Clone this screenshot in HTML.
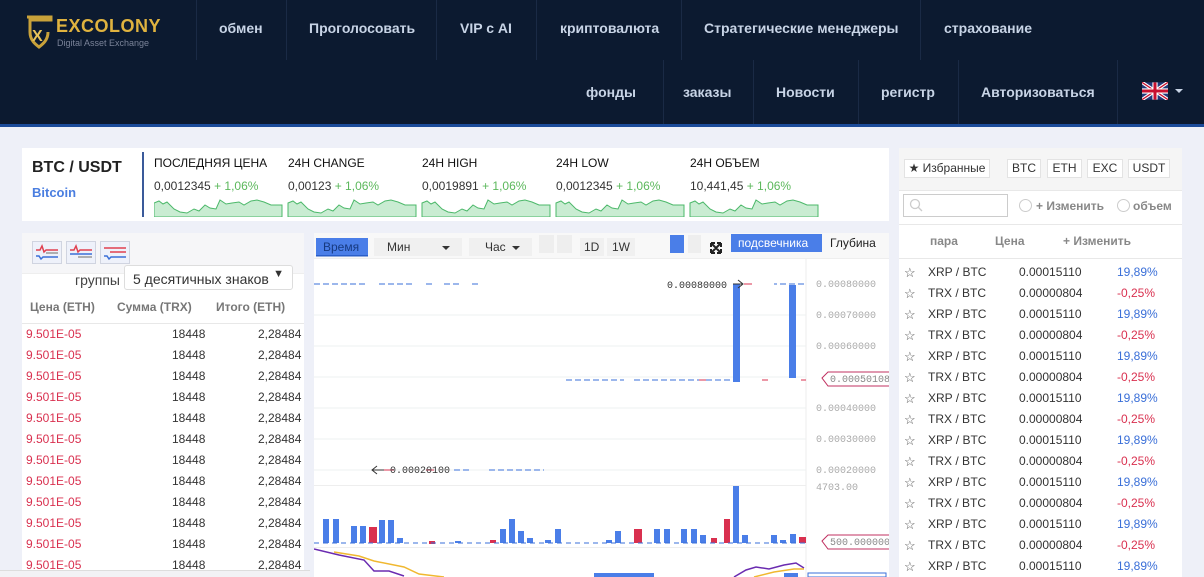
<!DOCTYPE html>
<html style="width:1204px;height:577px;overflow:hidden"><head><meta charset="utf-8">
<style>
*{margin:0;padding:0;box-sizing:border-box}
body{width:1204px;height:577px;overflow:hidden;background:#eef0f8;font-family:"Liberation Sans",Arial,sans-serif;position:relative;font-size:12px;color:#333}
.a{position:absolute;white-space:nowrap}
.nav{left:0;top:0;width:1204px;background:#0c1a30;border-bottom:3px solid #1b4b9a;height:127px}
.ni{position:absolute;color:#c8d4e6;font-weight:bold;font-size:14px;white-space:nowrap}
.sep{position:absolute;width:1px;background:#1a2a45}
.w{background:#fff}
.red{color:#d9304f}.grn{color:#5cb85c}.blu{color:#3a6fd8}
.ob div{position:absolute;font-size:12px;white-space:nowrap}
.btn{position:absolute;background:#fff;border:1px solid #e3e3e3;font-size:12px;text-align:center;line-height:17px;height:19px;top:159px;white-space:nowrap}
</style></head><body>
<div class="a nav"></div>
<!-- logo -->
<svg class="a" style="left:26px;top:15px" width="30" height="35" viewBox="0 0 30 35">
<path d="M1 2h24v3H4v12c0 8 5 12 9 15 4-3 9-7 9-15" fill="none" stroke="#c9a23a" stroke-width="3"/>
<text x="6" y="26" font-family="Liberation Sans" font-weight="bold" font-size="16" fill="#e8c35a">X</text></svg>
<div class="a" style="left:56px;top:16px;color:#e0b33f;font-weight:bold;font-size:18px;letter-spacing:0.5px">EXCOLONY</div>
<div class="a" style="left:57px;top:38px;color:#7a8398;font-size:9px">Digital Asset Exchange</div>
<!-- top nav -->
<div class="sep" style="left:196px;top:0;height:60px"></div>
<div class="sep" style="left:286px;top:0;height:60px"></div>
<div class="sep" style="left:436px;top:0;height:60px"></div>
<div class="sep" style="left:536px;top:0;height:60px"></div>
<div class="sep" style="left:681px;top:0;height:60px"></div>
<div class="sep" style="left:920px;top:0;height:60px"></div>
<div class="ni" style="left:219px;top:20px">обмен</div>
<div class="ni" style="left:309px;top:20px">Проголосовать</div>
<div class="ni" style="left:460px;top:20px">VIP с AI</div>
<div class="ni" style="left:560px;top:20px">криптовалюта</div>
<div class="ni" style="left:704px;top:20px">Стратегические менеджеры</div>
<div class="ni" style="left:944px;top:20px">страхование</div>
<div class="sep" style="left:663px;top:60px;height:64px"></div>
<div class="sep" style="left:753px;top:60px;height:64px"></div>
<div class="sep" style="left:858px;top:60px;height:64px"></div>
<div class="sep" style="left:958px;top:60px;height:64px"></div>
<div class="sep" style="left:1117px;top:60px;height:64px"></div>
<div class="ni" style="left:586px;top:84px">фонды</div>
<div class="ni" style="left:683px;top:84px">заказы</div>
<div class="ni" style="left:776px;top:84px">Новости</div>
<div class="ni" style="left:881px;top:84px">регистр</div>
<div class="ni" style="left:981px;top:84px">Авторизоваться</div>
<svg class="a" style="left:1142px;top:82px" width="26" height="18" viewBox="0 0 60 40"><rect width="60" height="40" fill="#22397a"/><path d="M0 0L60 40M60 0L0 40" stroke="#fff" stroke-width="8"/><path d="M0 0L60 40M60 0L0 40" stroke="#c8102e" stroke-width="3"/><path d="M30 0v40M0 20h60" stroke="#fff" stroke-width="12"/><path d="M30 0v40M0 20h60" stroke="#c8102e" stroke-width="7"/></svg>
<div class="a" style="left:1175px;top:89px;border:4px solid transparent;border-top:4px solid #c8d4e6"></div>

<!-- stats -->
<div class="a w" style="left:22px;top:148px;width:867px;height:73px"></div>
<div class="a" style="left:32px;top:159px;font-weight:bold;font-size:16px;color:#222">BTC / USDT</div>
<div class="a" style="left:32px;top:185px;font-weight:bold;font-size:13px;color:#4a7ee0">Bitcoin</div>
<div class="a" style="left:142px;top:152px;width:2px;height:65px;background:#3a5a9a"></div>
<div class="a" style="left:154px;top:156px;font-size:12px;color:#111">ПОСЛЕДНЯЯ ЦЕНА</div>
<div class="a" style="left:288px;top:156px;font-size:12px;color:#111">24H CHANGE</div>
<div class="a" style="left:422px;top:156px;font-size:12px;color:#111">24H HIGH</div>
<div class="a" style="left:556px;top:156px;font-size:12px;color:#111">24H LOW</div>
<div class="a" style="left:690px;top:156px;font-size:12px;color:#111">24H ОБЪЕМ</div>
<div class="a" style="left:154px;top:179px">0,0012345 <span class="grn">+ 1,06%</span></div>
<div class="a" style="left:288px;top:179px">0,00123 <span class="grn">+ 1,06%</span></div>
<div class="a" style="left:422px;top:179px">0,0019891 <span class="grn">+ 1,06%</span></div>
<div class="a" style="left:556px;top:179px">0,0012345 <span class="grn">+ 1,06%</span></div>
<div class="a" style="left:690px;top:179px">10,441,45 <span class="grn">+ 1,06%</span></div>
<svg class="a" style="left:154px;top:197px" width="670" height="20">
<defs><path id="sp" d="M0 6L5 4L9 7L13 5L20 12L26 15L33 16L40 12L45 14L51 8L56 11L62 12L66 3L72 7L78 6L85 5L90 8L97 4L103 3L110 5L117 8L128 8V20H0Z"/></defs>
<g fill="#c9ecd2" stroke="#4cb86a" stroke-width="1">
<use href="#sp"/><use href="#sp" x="134"/><use href="#sp" x="268"/><use href="#sp" x="402"/><use href="#sp" x="536"/></g></svg>

<!-- order book -->
<div class="a" style="left:22px;top:233px;width:282px;height:344px;background:#fff"></div>
<div class="a" style="left:22px;top:233px;width:282px;height:40px;background:#f6f6f8"></div>
<svg class="a" style="left:32px;top:241px" width="100" height="24">
<g fill="#eef1fa" stroke="#d0d4e0"><rect x="0.5" y="0.5" width="29" height="22"/><rect x="34.5" y="0.5" width="29" height="22"/><rect x="68.5" y="0.5" width="29" height="22"/></g>
<g stroke-width="1.5" fill="none"><path d="M4 9h4l2-4 2 6 2-2h12" stroke="#e04050"/><path d="M4 15h3l2 3 2-2h15" stroke="#3a6fd8"/><path d="M14 12h12" stroke="#999"/>
<path d="M38 9h4l2-4 2 6 2-2h12" stroke="#e04050"/><path d="M38 13h22" stroke="#3a6fd8"/><path d="M46 16h14" stroke="#999"/>
<path d="M72 7h22M78 11h16" stroke="#e04050"/><path d="M72 15h3l2 3 2-2h15" stroke="#3a6fd8"/></g></svg>
<div class="a" style="left:22px;top:273px;width:282px;height:1px;background:#eee"></div>
<div class="a" style="left:75px;top:272px;font-size:14px;color:#444">группы</div>
<div class="a" style="left:124px;top:265px;width:169px;height:25px;background:#fff;border:1px solid #ddd;border-radius:3px;font-size:14px;padding:5px 8px;color:#333">5 десятичных знаков<span style="position:absolute;right:8px;top:2px;font-size:11px">▼</span></div>
<div class="a" style="left:30px;top:300px;font-weight:bold;color:#777">Цена (ETH)</div>
<div class="a" style="left:117px;top:300px;font-weight:bold;color:#777">Сумма (TRX)</div>
<div class="a" style="left:216px;top:300px;font-weight:bold;color:#777">Итого (ETH)</div>
<div class="a" style="left:22px;top:323px;width:282px;height:1px;background:#e8e8e8"></div>
<div class="a ob" style="left:0;top:0">
<div class="red" style="left:26px;top:327px">9.501E-05</div><div style="left:172px;top:327px">18448</div><div style="left:258px;top:327px">2,28484</div>
<div class="red" style="left:26px;top:348px">9.501E-05</div><div style="left:172px;top:348px">18448</div><div style="left:258px;top:348px">2,28484</div>
<div class="red" style="left:26px;top:369px">9.501E-05</div><div style="left:172px;top:369px">18448</div><div style="left:258px;top:369px">2,28484</div>
<div class="red" style="left:26px;top:390px">9.501E-05</div><div style="left:172px;top:390px">18448</div><div style="left:258px;top:390px">2,28484</div>
<div class="red" style="left:26px;top:411px">9.501E-05</div><div style="left:172px;top:411px">18448</div><div style="left:258px;top:411px">2,28484</div>
<div class="red" style="left:26px;top:432px">9.501E-05</div><div style="left:172px;top:432px">18448</div><div style="left:258px;top:432px">2,28484</div>
<div class="red" style="left:26px;top:453px">9.501E-05</div><div style="left:172px;top:453px">18448</div><div style="left:258px;top:453px">2,28484</div>
<div class="red" style="left:26px;top:474px">9.501E-05</div><div style="left:172px;top:474px">18448</div><div style="left:258px;top:474px">2,28484</div>
<div class="red" style="left:26px;top:495px">9.501E-05</div><div style="left:172px;top:495px">18448</div><div style="left:258px;top:495px">2,28484</div>
<div class="red" style="left:26px;top:516px">9.501E-05</div><div style="left:172px;top:516px">18448</div><div style="left:258px;top:516px">2,28484</div>
<div class="red" style="left:26px;top:537px">9.501E-05</div><div style="left:172px;top:537px">18448</div><div style="left:258px;top:537px">2,28484</div>
<div class="red" style="left:26px;top:558px">9.501E-05</div><div style="left:172px;top:558px">18448</div><div style="left:258px;top:558px">2,28484</div>
</div>
<div class="a" style="left:0;top:570px;width:310px;height:7px;background:#f2f2f5;border-top:1px solid #ddd"></div>

<!-- chart -->
<div class="a" style="left:314px;top:233px;width:575px;height:344px;background:#fff"></div>
<div class="a" style="left:314px;top:233px;width:575px;height:26px;background:#f8f8f8"></div>
<svg class="a" style="left:314px;top:233px" width="575" height="344" font-family="Liberation Sans" font-size="12">
<rect x="2" y="5" width="52" height="18" fill="#4a7ee8"/><rect x="2" y="22" width="52" height="1.5" fill="#2a5ec8"/>
<text x="9" y="18" fill="#173a80">Время</text>
<rect x="60" y="5" width="54" height="18" fill="#f0f0f0"/><text x="73" y="18" fill="#333">Мин</text>
<rect x="114" y="5" width="34" height="18" fill="#f0f0f0"/><path d="M128 13l4 4 4-4z" fill="#333"/>
<rect x="155" y="5" width="63" height="18" fill="#f0f0f0"/><text x="171" y="18" fill="#333">Час</text><path d="M198 13l4 4 4-4z" fill="#333"/>
<rect x="225" y="2" width="15" height="18" fill="#eee"/><rect x="243" y="2" width="15" height="18" fill="#eee"/>
<rect x="266" y="5" width="24" height="18" fill="#f0f0f0"/><text x="270" y="18" fill="#333">1D</text>
<rect x="293" y="5" width="28" height="18" fill="#f0f0f0"/><text x="298" y="18" fill="#333">1W</text>
<rect x="356" y="2" width="14" height="18" fill="#4a7ee8"/><rect x="374" y="2" width="13" height="18" fill="#eee"/>
<path d="M398 11l8 8M406 11l-8 8M397 10h4M397 10v4M407 10h-4M407 10v4M397 20h4M397 20v-4M407 20h-4M407 20v-4" stroke="#222" stroke-width="2"/>
<rect x="417" y="1" width="91" height="18" fill="#4a7ee8"/><text x="424" y="14" fill="#fff" font-size="12">подсвечника</text>
<text x="516" y="14" fill="#222">Глубина</text>
<rect x="0" y="25" width="575" height="1" fill="#eee"/>
<g stroke="#eef0f2"><path d="M0 82H492M0 113H492M0 144H492M0 175H492M0 206H492M0 237H492"/></g>
<path d="M492 26V550" stroke="#eee"/>
<g fill="#aaa" font-family="Liberation Mono" font-size="10">
<text x="502" y="54">0.00080000</text><text x="502" y="85">0.00070000</text><text x="502" y="116">0.00060000</text>
<text x="502" y="178">0.00040000</text><text x="502" y="209">0.00030000</text><text x="502" y="240">0.00020000</text>
<text x="502" y="257">4703.00</text></g>
<g stroke="#3a6fd8" stroke-width="1" stroke-dasharray="6 3"><path d="M0 51H52M65 51H100M112 51H118M130 51H148M158 51H165"/><path d="M252 147H310M320 147H420"/><path d="M140 237H155M175 237H230"/><path d="M490 51H460"/></g>
<g stroke="#d9304f" stroke-width="1"><path d="M430 51H438M448 147H454M385 147H392M487 147H492M112 237H120M70 237H80"/></g>
<rect x="419" y="51" width="7" height="98" fill="#4a7ee8"/><rect x="475" y="52" width="7" height="93" fill="#4a7ee8"/>
<text x="353" y="55" font-family="Liberation Mono" font-size="10" fill="#333">0.00080000</text>
<path d="M419 51h10M424 47l5 4-5 4" stroke="#333" fill="none"/>
<path d="M58 237h12M63 233l-5 4 5 4" stroke="#333" fill="none"/>
<text x="76" y="240" font-family="Liberation Mono" font-size="10" fill="#333">0.00020100</text>
<path d="M508 145l6-6h72v14h-72z" fill="#fff" stroke="#c03060"/><text x="516" y="149" font-family="Liberation Mono" font-size="10" fill="#888">0.00050108</text>
<rect x="0" y="252" width="492" height="1" fill="#eee"/>
<g fill="#4a7ee8">
<rect x="9" y="286" width="6" height="24"/><rect x="19" y="286" width="6" height="24"/><rect x="37" y="293" width="6" height="17"/><rect x="46" y="293" width="6" height="17"/><rect x="65" y="287" width="6" height="23"/><rect x="74" y="287" width="6" height="23"/><rect x="83" y="305" width="6" height="5"/><rect x="141" y="308" width="6" height="2"/><rect x="186" y="296" width="6" height="14"/><rect x="195" y="286" width="6" height="24"/><rect x="204" y="298" width="6" height="12"/><rect x="213" y="305" width="6" height="5"/><rect x="231" y="307" width="6" height="3"/><rect x="241" y="296" width="6" height="14"/><rect x="292" y="307" width="6" height="3"/><rect x="301" y="298" width="6" height="12"/><rect x="340" y="296" width="6" height="14"/><rect x="350" y="296" width="6" height="14"/><rect x="367" y="296" width="6" height="14"/><rect x="377" y="296" width="6" height="14"/><rect x="386" y="302" width="6" height="8"/><rect x="419" y="253" width="6" height="57"/><rect x="428" y="302" width="6" height="8"/><rect x="457" y="302" width="6" height="8"/><rect x="466" y="307" width="6" height="3"/><rect x="476" y="301" width="6" height="9"/></g>
<g fill="#d9304f"><rect x="55" y="294" width="8" height="16"/><rect x="115" y="308" width="6" height="3"/><rect x="176" y="307" width="6" height="3"/><rect x="320" y="296" width="8" height="14"/><rect x="397" y="305" width="6" height="5"/><rect x="410" y="286" width="6" height="24"/><rect x="485" y="304" width="7" height="6"/></g>
<path d="M0 310H492" stroke="#3a6fd8" stroke-dasharray="5 4"/>
<path d="M508 308l6-6h72v14h-72z" fill="#fff" stroke="#c03060"/><text x="516" y="312" font-family="Liberation Mono" font-size="10" fill="#888">500.00000000</text>
<rect x="0" y="314" width="492" height="1" fill="#eee"/>
<path d="M0 316L25 322L50 327L60 338L75 338L90 343" stroke="#6a2bb0" stroke-width="1.5" fill="none"/>
<path d="M20 319L45 323L60 328L90 334L105 341L130 344" stroke="#f0b830" stroke-width="1.5" fill="none"/>
<path d="M420 344L432 337L442 334L455 336L470 332L482 330L490 335" stroke="#6a2bb0" stroke-width="1.5" fill="none"/>
<path d="M440 344L460 339L480 336L490 336" stroke="#f0b830" stroke-width="1.5" fill="none"/>
<g fill="#4a7ee8"><rect x="280" y="340" width="60" height="4"/><rect x="470" y="340" width="14" height="4"/></g>
<rect x="494" y="340" width="78" height="4" fill="none" stroke="#3a6fd8"/>
</svg>

<!-- right panel -->
<div class="a" style="left:899px;top:148px;width:283px;height:429px;background:#fff"></div>
<div class="a" style="left:899px;top:148px;width:283px;height:42px;background:#f5f5f5"></div>
<div class="btn" style="left:904px;width:86px">★ Избранные</div>
<div class="btn" style="left:1007px;width:34px">BTC</div>
<div class="btn" style="left:1047px;width:35px">ETH</div>
<div class="btn" style="left:1087px;width:36px">EXC</div>
<div class="btn" style="left:1128px;width:42px">USDT</div>
<div class="a" style="left:899px;top:190px;width:283px;height:1px;background:#e8e8e8"></div>
<div class="a" style="left:903px;top:194px;width:105px;height:23px;border:1px solid #ccc"></div>
<svg class="a" style="left:909px;top:198px" width="14" height="14"><circle cx="6" cy="6" r="4.5" fill="none" stroke="#ccc" stroke-width="1.3"/><path d="M9 9l4 4" stroke="#ccc" stroke-width="1.3"/></svg>
<div class="a" style="left:1019px;top:199px;width:13px;height:13px;border:1px solid #ccc;border-radius:50%"></div>
<div class="a" style="left:1036px;top:199px;font-weight:bold;color:#888">+ Изменить</div>
<div class="a" style="left:1117px;top:199px;width:13px;height:13px;border:1px solid #ccc;border-radius:50%"></div>
<div class="a" style="left:1133px;top:199px;font-weight:bold;color:#888">объем</div>
<div class="a" style="left:899px;top:224px;width:283px;height:1px;background:#e8e8e8"></div>
<div class="a" style="left:930px;top:234px;font-weight:bold;color:#888">пара</div>
<div class="a" style="left:995px;top:234px;font-weight:bold;color:#888">Цена</div>
<div class="a" style="left:1063px;top:234px;font-weight:bold;color:#888">+ Изменить</div>
<div class="a" style="left:899px;top:258px;width:283px;height:1px;background:#e8e8e8"></div>
<div class="a" style="left:904px;top:262px;line-height:21px;color:#555;font-size:13px">☆<br>☆<br>☆<br>☆<br>☆<br>☆<br>☆<br>☆<br>☆<br>☆<br>☆<br>☆<br>☆<br>☆<br>☆</div>
<div class="a" style="left:928px;top:262px;line-height:21px;color:#333">XRP / BTC<br>TRX / BTC<br>XRP / BTC<br>TRX / BTC<br>XRP / BTC<br>TRX / BTC<br>XRP / BTC<br>TRX / BTC<br>XRP / BTC<br>TRX / BTC<br>XRP / BTC<br>TRX / BTC<br>XRP / BTC<br>TRX / BTC<br>XRP / BTC</div>
<div class="a" style="left:1019px;top:262px;line-height:21px;color:#333">0.00015110<br>0.00000804<br>0.00015110<br>0.00000804<br>0.00015110<br>0.00000804<br>0.00015110<br>0.00000804<br>0.00015110<br>0.00000804<br>0.00015110<br>0.00000804<br>0.00015110<br>0.00000804<br>0.00015110</div>
<div class="a" style="left:1117px;top:262px;line-height:21px"><span class="blu">19,89%</span><br><span class="red">-0,25%</span><br><span class="blu">19,89%</span><br><span class="red">-0,25%</span><br><span class="blu">19,89%</span><br><span class="red">-0,25%</span><br><span class="blu">19,89%</span><br><span class="red">-0,25%</span><br><span class="blu">19,89%</span><br><span class="red">-0,25%</span><br><span class="blu">19,89%</span><br><span class="red">-0,25%</span><br><span class="blu">19,89%</span><br><span class="red">-0,25%</span><br><span class="blu">19,89%</span></div>
</body></html>
